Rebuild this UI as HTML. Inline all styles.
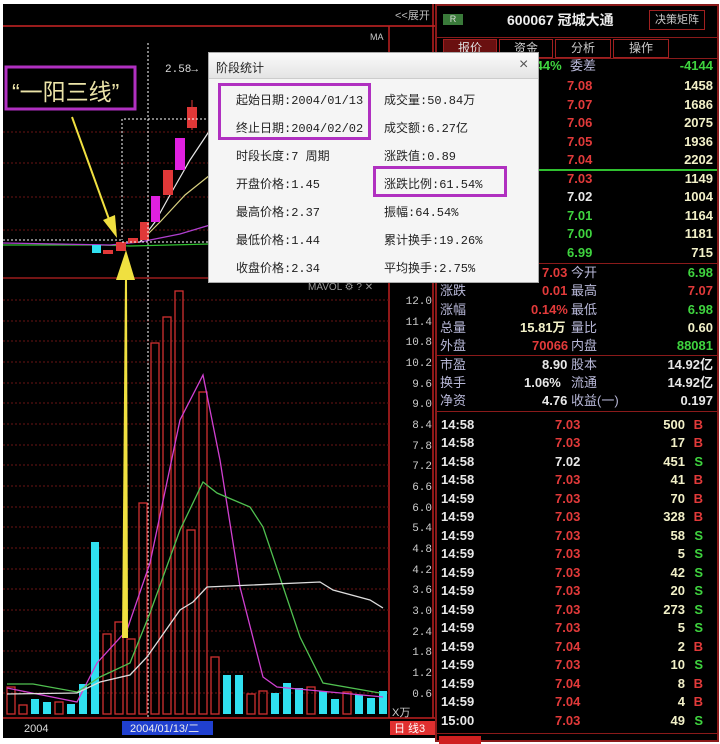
<!DOCTYPE html>
<html><head><meta charset="utf-8"><style>
*{margin:0;padding:0;box-sizing:border-box}
body{width:720px;height:742px;background:#fff;position:relative;overflow:hidden;font-family:"Liberation Sans","Noto Sans CJK SC",sans-serif}
.a{position:absolute;white-space:nowrap}
#qp{position:absolute;left:435px;top:4px;width:284px;height:738px;background:#000;border:2px solid #8a1a1a}
.r{position:absolute;left:0;width:280px;height:18px;font-size:13px;font-weight:bold;line-height:18px}
.r span{position:absolute}
.red{color:#e23a3a}.grn{color:#3fd43f}.wht{color:#e8e8e8}.yel{color:#f2f0c8}.lab{color:#b8b8d8;font-weight:normal}
.dlg{position:absolute;left:208px;top:52px;width:331px;height:231px;background:#f5f5f5;border:1px solid #aaa}
.dlg .t{position:absolute;font-size:12px;color:#222;font-family:"Liberation Mono","Noto Sans CJK SC",monospace}
</style></head><body>
<div class="a" style="left:3px;top:4px;width:433px;height:734px;background:#000"></div>
<svg class="a" style="left:0;top:0" width="436" height="742">
<!-- top bar -->
<line x1="3" y1="26" x2="436" y2="26" stroke="#9a1c1c" stroke-width="2"/>
<line x1="389" y1="26" x2="389" y2="718" stroke="#c02020" stroke-width="1.5"/>
<line x1="433" y1="4" x2="433" y2="718" stroke="#c02020" stroke-width="1.5"/>
<line x1="3" y1="278" x2="389" y2="278" stroke="#9a1c1c" stroke-width="1.5"/>
<line x1="3" y1="718" x2="436" y2="718" stroke="#c02020" stroke-width="1.5"/>
<text x="395" y="19" fill="#bbb" font-size="11" font-family="Liberation Sans,Noto Sans CJK SC,sans-serif">&lt;&lt;展开</text>
<text x="370" y="40" fill="#ccc" font-size="9" font-family="Liberation Sans,sans-serif">MA</text>
<g stroke="#6a1515" stroke-dasharray="2,2" stroke-width="1">
<line x1="3" y1="132" x2="389" y2="132"/><line x1="3" y1="163" x2="389" y2="163"/><line x1="3" y1="197" x2="389" y2="197"/><line x1="3" y1="230" x2="389" y2="230"/>
<line x1="3" y1="300" x2="389" y2="300"/><line x1="3" y1="321" x2="389" y2="321"/><line x1="3" y1="341" x2="389" y2="341"/><line x1="3" y1="362" x2="389" y2="362"/><line x1="3" y1="383" x2="389" y2="383"/><line x1="3" y1="403" x2="389" y2="403"/><line x1="3" y1="424" x2="389" y2="424"/><line x1="3" y1="445" x2="389" y2="445"/><line x1="3" y1="465" x2="389" y2="465"/><line x1="3" y1="486" x2="389" y2="486"/><line x1="3" y1="507" x2="389" y2="507"/><line x1="3" y1="527" x2="389" y2="527"/><line x1="3" y1="548" x2="389" y2="548"/><line x1="3" y1="569" x2="389" y2="569"/><line x1="3" y1="589" x2="389" y2="589"/><line x1="3" y1="610" x2="389" y2="610"/><line x1="3" y1="631" x2="389" y2="631"/><line x1="3" y1="651" x2="389" y2="651"/><line x1="3" y1="672" x2="389" y2="672"/><line x1="3" y1="693" x2="389" y2="693"/>
</g>
<!-- price MA -->
<polyline points="3,245 100,245 130,246 210,244" fill="none" stroke="#30c030" stroke-width="1.2"/>
<polyline points="3,243 110,245 140,242 180,234 210,225" fill="none" stroke="#b040d0" stroke-width="1.2"/>
<polyline points="140,242 160,222 185,195 210,175" fill="none" stroke="#d8d080" stroke-width="1.2"/>
<polyline points="140,242 155,222 170,195 190,160 210,130" fill="none" stroke="#e8e8e8" stroke-width="1.2"/>
<!-- candles -->
<rect x="92" y="245" width="9" height="8" fill="#30e0f0"/>
<rect x="103" y="250" width="10" height="4" fill="#e03838"/>
<rect x="116" y="242" width="10" height="9" fill="#e03838"/>
<rect x="128" y="238" width="10" height="5" fill="#e03838"/>
<rect x="140" y="222" width="9" height="18" fill="#e03838"/>
<rect x="151" y="196" width="9" height="26" fill="#e020e0"/>
<rect x="163" y="170" width="10" height="25" fill="#e03838"/>
<rect x="175" y="138" width="10" height="32" fill="#e020e0"/>
<line x1="192" y1="100" x2="192" y2="130" stroke="#e03838"/>
<rect x="187" y="107" width="10" height="21" fill="#e03838"/>
<!-- dotted annotation -->
<g stroke="#fff" stroke-dasharray="2,2" fill="none" stroke-width="1">
<line x1="148" y1="43" x2="148" y2="718"/>
<polyline points="210,119 122,119 122,240"/>
<line x1="3" y1="240" x2="122" y2="240"/>
<line x1="122" y1="242" x2="210" y2="242"/>
</g>
<text x="165" y="72" fill="#ddd" font-size="11" font-family="Liberation Mono,monospace">2.58→</text>
<rect x="6" y="67" width="129" height="42" fill="none" stroke="#b030c0" stroke-width="3"/>
<text x="12" y="100" fill="#ece4a8" font-size="23" font-family="Liberation Sans,Noto Sans CJK SC,sans-serif">“一阳三线”</text>
<line x1="72" y1="117" x2="110" y2="222" stroke="#f0e040" stroke-width="2"/>
<polygon points="103,220 117,238 115,215" fill="#f0e040"/>
<!-- volume bars -->
<g fill="none" stroke="#d03030" stroke-width="1.3">
<rect x="7" y="687" width="8" height="27"/><rect x="19" y="705" width="8" height="9"/><rect x="55" y="702" width="8" height="12"/>
<rect x="103" y="634" width="8" height="80"/><rect x="115" y="622" width="8" height="92"/><rect x="127" y="639" width="8" height="75"/><rect x="139" y="503" width="8" height="211"/><rect x="151" y="343" width="8" height="371"/><rect x="163" y="317" width="8" height="397"/><rect x="175" y="291" width="8" height="423"/><rect x="187" y="530" width="8" height="184"/><rect x="199" y="392" width="8" height="322"/><rect x="211" y="657" width="8" height="57"/>
<rect x="247" y="694" width="8" height="20"/><rect x="259" y="691" width="8" height="23"/><rect x="307" y="687" width="8" height="27"/><rect x="343" y="692" width="8" height="22"/>
</g>
<g fill="#30e0f0">
<rect x="31" y="699" width="8" height="15"/><rect x="43" y="702" width="8" height="12"/><rect x="67" y="704" width="8" height="10"/><rect x="79" y="684" width="8" height="30"/><rect x="91" y="542" width="8" height="172"/>
<rect x="223" y="675" width="8" height="39"/><rect x="235" y="675" width="8" height="39"/><rect x="271" y="693" width="8" height="21"/><rect x="283" y="683" width="8" height="31"/><rect x="295" y="688" width="8" height="26"/><rect x="319" y="691" width="8" height="23"/><rect x="331" y="699" width="8" height="15"/><rect x="355" y="695" width="8" height="19"/><rect x="367" y="698" width="8" height="16"/><rect x="379" y="691" width="8" height="23"/>
</g>
<polyline points="7,688 77,702 97,663 127,630 150,563 180,420 203,375 220,460 240,587 263,677 277,687 383,697" fill="none" stroke="#d040d0" stroke-width="1.3"/>
<polyline points="7,684 33,684 77,692 100,677 130,663 150,613 180,530 203,482 217,493 250,507 263,527 300,637 323,683 380,693" fill="none" stroke="#50c050" stroke-width="1.3"/>
<polyline points="7,694 77,693 100,682 130,675 147,657 180,610 193,602 207,587 320,582 333,590 370,600 383,608" fill="none" stroke="#ddd" stroke-width="1.3"/>
<!-- yellow big arrow -->
<polygon points="122,638 128,638 127,275 125,275" fill="#f0e040"/>
<polygon points="116,280 126,250 135,280" fill="#f0e040"/>
<g fill="#ccc" font-size="11" font-family="Liberation Mono,monospace" text-anchor="end">
<text x="432" y="304">12.0</text><text x="432" y="325">11.4</text><text x="432" y="345">10.8</text><text x="432" y="366">10.2</text><text x="432" y="387">9.6</text><text x="432" y="407">9.0</text><text x="432" y="428">8.4</text><text x="432" y="449">7.8</text><text x="432" y="469">7.2</text><text x="432" y="490">6.6</text><text x="432" y="511">6.0</text><text x="432" y="531">5.4</text><text x="432" y="552">4.8</text><text x="432" y="573">4.2</text><text x="432" y="593">3.6</text><text x="432" y="614">3.0</text><text x="432" y="635">2.4</text><text x="432" y="655">1.8</text><text x="432" y="676">1.2</text><text x="432" y="697">0.6</text>
</g>
<text x="392" y="716" fill="#ccc" font-size="11" font-family="Liberation Sans,Noto Sans CJK SC,sans-serif">X万</text>
<text x="308" y="290" fill="#999" font-size="10" font-family="Liberation Sans,sans-serif">MAVOL ⚙ ? ✕</text>
<text x="24" y="732" fill="#ddd" font-size="11" font-family="Liberation Sans,sans-serif">2004</text>
<rect x="122" y="721" width="91" height="14" fill="#2040d0"/>
<text x="130" y="732" fill="#eee" font-size="11" font-family="Liberation Sans,Noto Sans CJK SC,sans-serif">2004/01/13/二</text>
<rect x="390" y="721" width="45" height="14" fill="#e03030"/>
<text x="394" y="732" fill="#fff" font-size="11" font-family="Liberation Sans,Noto Sans CJK SC,sans-serif">日 线3</text>
</svg>

<div id="qp">
<div class="a" style="left:6px;top:8px;width:20px;height:11px;background:#3a7a3a;color:#ddd;font-size:9px;text-align:center;line-height:11px">R</div>
<div class="a" style="left:70px;top:4px;color:#eee;font-size:14px;font-weight:bold">600067 冠城大通</div>
<div class="a" style="left:212px;top:4px;width:56px;height:20px;border:1px solid #a02020;color:#ccc;font-size:11px;text-align:center;line-height:18px">决策矩阵</div>
<div class="a" style="left:0;top:31px;width:280px;height:1px;background:#8a1a1a"></div>
<div class="a" style="left:6px;top:33px;width:54px;height:19px;background:#6a1010;border:1px solid #a02020;color:#ddd;font-size:12px;text-align:center;line-height:17px">报价</div>
<div class="a" style="left:62px;top:33px;width:54px;height:19px;border:1px solid #a02020;color:#ccc;font-size:12px;text-align:center;line-height:17px">资金</div>
<div class="a" style="left:118px;top:33px;width:56px;height:19px;border:1px solid #a02020;color:#ccc;font-size:12px;text-align:center;line-height:17px">分析</div>
<div class="a" style="left:176px;top:33px;width:56px;height:19px;border:1px solid #a02020;color:#ccc;font-size:12px;text-align:center;line-height:17px">操作</div>
<div class="a" style="left:0;top:52px;width:280px;height:1px;background:#8a1a1a"></div>
<div class="r" style="top:51px"><span class="grn" style="left:95px">.44%</span><span class="lab" style="left:133px">委差</span><span class="grn" style="right:4px">-4144</span></div>
<div class="r" style="top:71px"><span class="red" style="left:130px">7.08</span><span class="yel" style="right:4px">1458</span></div>
<div class="r" style="top:90px"><span class="red" style="left:130px">7.07</span><span class="yel" style="right:4px">1686</span></div>
<div class="r" style="top:108px"><span class="red" style="left:130px">7.06</span><span class="yel" style="right:4px">2075</span></div>
<div class="r" style="top:127px"><span class="red" style="left:130px">7.05</span><span class="yel" style="right:4px">1936</span></div>
<div class="r" style="top:145px"><span class="red" style="left:130px">7.04</span><span class="yel" style="right:4px">2202</span></div>
<div class="a" style="left:0;top:163px;width:280px;height:2px;background:#30c030"></div>
<div class="r" style="top:164px"><span class="red" style="left:130px">7.03</span><span class="yel" style="right:4px">1149</span></div>
<div class="r" style="top:182px"><span class="wht" style="left:130px">7.02</span><span class="yel" style="right:4px">1004</span></div>
<div class="r" style="top:201px"><span class="grn" style="left:130px">7.01</span><span class="yel" style="right:4px">1164</span></div>
<div class="r" style="top:219px"><span class="grn" style="left:130px">7.00</span><span class="yel" style="right:4px">1181</span></div>
<div class="r" style="top:238px"><span class="grn" style="left:130px">6.99</span><span class="yel" style="right:4px">715</span></div>
<div class="a" style="left:0;top:257px;width:280px;height:1px;background:#8a1a1a"></div>
<div class="r" style="top:258px"><span class="red" style="left:105px">7.03</span><span class="lab" style="left:134px">今开</span><span class="grn" style="right:4px">6.98</span></div>
<div class="r" style="top:276px"><span class="lab" style="left:3px">涨跌</span><span class="red" style="left:105px">0.01</span><span class="lab" style="left:134px">最高</span><span class="red" style="right:4px">7.07</span></div>
<div class="r" style="top:295px"><span class="lab" style="left:3px">涨幅</span><span class="red" style="left:94px">0.14%</span><span class="lab" style="left:134px">最低</span><span class="grn" style="right:4px">6.98</span></div>
<div class="r" style="top:313px"><span class="lab" style="left:3px">总量</span><span class="yel" style="left:83px">15.81万</span><span class="lab" style="left:134px">量比</span><span class="yel" style="right:4px">0.60</span></div>
<div class="r" style="top:331px"><span class="lab" style="left:3px">外盘</span><span class="red" style="left:95px">70066</span><span class="lab" style="left:134px">内盘</span><span class="grn" style="right:4px">88081</span></div>
<div class="a" style="left:0;top:349px;width:280px;height:1px;background:#8a1a1a"></div>
<div class="r" style="top:350px"><span class="lab" style="left:3px">市盈</span><span class="wht" style="left:105px">8.90</span><span class="lab" style="left:134px">股本</span><span class="wht" style="right:4px">14.92亿</span></div>
<div class="r" style="top:368px"><span class="lab" style="left:3px">换手</span><span class="wht" style="left:87px">1.06%</span><span class="lab" style="left:134px">流通</span><span class="wht" style="right:4px">14.92亿</span></div>
<div class="r" style="top:386px"><span class="lab" style="left:3px">净资</span><span class="wht" style="left:105px">4.76</span><span class="lab" style="left:134px">收益(一)</span><span class="wht" style="right:4px">0.197</span></div>
<div class="a" style="left:0;top:405px;width:280px;height:1px;background:#8a1a1a"></div>
<div class="r" style="top:410px"><span class="wht" style="left:4px">14:58</span><span class="red" style="left:118px">7.03</span><span class="yel" style="right:32px">500</span><span class="red" style="right:14px">B</span></div>
<div class="r" style="top:428px"><span class="wht" style="left:4px">14:58</span><span class="red" style="left:118px">7.03</span><span class="yel" style="right:32px">17</span><span class="red" style="right:14px">B</span></div>
<div class="r" style="top:447px"><span class="wht" style="left:4px">14:58</span><span class="wht" style="left:118px">7.02</span><span class="yel" style="right:32px">451</span><span class="grn" style="right:14px">S</span></div>
<div class="r" style="top:465px"><span class="wht" style="left:4px">14:58</span><span class="red" style="left:118px">7.03</span><span class="yel" style="right:32px">41</span><span class="red" style="right:14px">B</span></div>
<div class="r" style="top:484px"><span class="wht" style="left:4px">14:59</span><span class="red" style="left:118px">7.03</span><span class="yel" style="right:32px">70</span><span class="red" style="right:14px">B</span></div>
<div class="r" style="top:502px"><span class="wht" style="left:4px">14:59</span><span class="red" style="left:118px">7.03</span><span class="yel" style="right:32px">328</span><span class="red" style="right:14px">B</span></div>
<div class="r" style="top:521px"><span class="wht" style="left:4px">14:59</span><span class="red" style="left:118px">7.03</span><span class="yel" style="right:32px">58</span><span class="grn" style="right:14px">S</span></div>
<div class="r" style="top:539px"><span class="wht" style="left:4px">14:59</span><span class="red" style="left:118px">7.03</span><span class="yel" style="right:32px">5</span><span class="grn" style="right:14px">S</span></div>
<div class="r" style="top:558px"><span class="wht" style="left:4px">14:59</span><span class="red" style="left:118px">7.03</span><span class="yel" style="right:32px">42</span><span class="grn" style="right:14px">S</span></div>
<div class="r" style="top:576px"><span class="wht" style="left:4px">14:59</span><span class="red" style="left:118px">7.03</span><span class="yel" style="right:32px">20</span><span class="grn" style="right:14px">S</span></div>
<div class="r" style="top:595px"><span class="wht" style="left:4px">14:59</span><span class="red" style="left:118px">7.03</span><span class="yel" style="right:32px">273</span><span class="grn" style="right:14px">S</span></div>
<div class="r" style="top:613px"><span class="wht" style="left:4px">14:59</span><span class="red" style="left:118px">7.03</span><span class="yel" style="right:32px">5</span><span class="grn" style="right:14px">S</span></div>
<div class="r" style="top:632px"><span class="wht" style="left:4px">14:59</span><span class="red" style="left:118px">7.04</span><span class="yel" style="right:32px">2</span><span class="red" style="right:14px">B</span></div>
<div class="r" style="top:650px"><span class="wht" style="left:4px">14:59</span><span class="red" style="left:118px">7.03</span><span class="yel" style="right:32px">10</span><span class="grn" style="right:14px">S</span></div>
<div class="r" style="top:669px"><span class="wht" style="left:4px">14:59</span><span class="red" style="left:118px">7.04</span><span class="yel" style="right:32px">8</span><span class="red" style="right:14px">B</span></div>
<div class="r" style="top:687px"><span class="wht" style="left:4px">14:59</span><span class="red" style="left:118px">7.04</span><span class="yel" style="right:32px">4</span><span class="red" style="right:14px">B</span></div>
<div class="r" style="top:706px"><span class="wht" style="left:4px">15:00</span><span class="red" style="left:118px">7.03</span><span class="yel" style="right:32px">49</span><span class="grn" style="right:14px">S</span></div>
<div class="a" style="left:0;top:727px;width:280px;height:1px;background:#8a1a1a"></div>
<div class="a" style="left:2px;top:730px;width:42px;height:8px;background:#d02020"></div>
</div>

<div class="dlg">
<div class="a" style="left:0;top:0;width:329px;height:26px;background:linear-gradient(#fafafa,#e4e4e4);border-bottom:1px solid #ccc"></div>
<div class="t" style="left:7px;top:6px;font-family:'Liberation Sans','Noto Sans CJK SC',sans-serif;font-size:12px">阶段统计</div>
<div class="t" style="left:310px;top:3px;font-size:16px;color:#555;font-family:'Liberation Sans',sans-serif">×</div>
<div class="a" style="left:9px;top:30px;width:153px;height:57px;border:3px solid #b030c0"></div>
<div class="a" style="left:164px;top:113px;width:134px;height:31px;border:3px solid #b030c0"></div>
<div class="t" style="left:27px;top:38px">起始日期:2004/01/13</div>
<div class="t" style="left:27px;top:66px">终止日期:2004/02/02</div>
<div class="t" style="left:27px;top:94px">时段长度:7 周期</div>
<div class="t" style="left:27px;top:122px">开盘价格:1.45</div>
<div class="t" style="left:27px;top:150px">最高价格:2.37</div>
<div class="t" style="left:27px;top:178px">最低价格:1.44</div>
<div class="t" style="left:27px;top:206px">收盘价格:2.34</div>
<div class="t" style="left:175px;top:38px">成交量:50.84万</div>
<div class="t" style="left:175px;top:66px">成交额:6.27亿</div>
<div class="t" style="left:175px;top:94px">涨跌值:0.89</div>
<div class="t" style="left:175px;top:122px">涨跌比例:61.54%</div>
<div class="t" style="left:175px;top:150px">振幅:64.54%</div>
<div class="t" style="left:175px;top:178px">累计换手:19.26%</div>
<div class="t" style="left:175px;top:206px">平均换手:2.75%</div>
</div>
</body></html>
